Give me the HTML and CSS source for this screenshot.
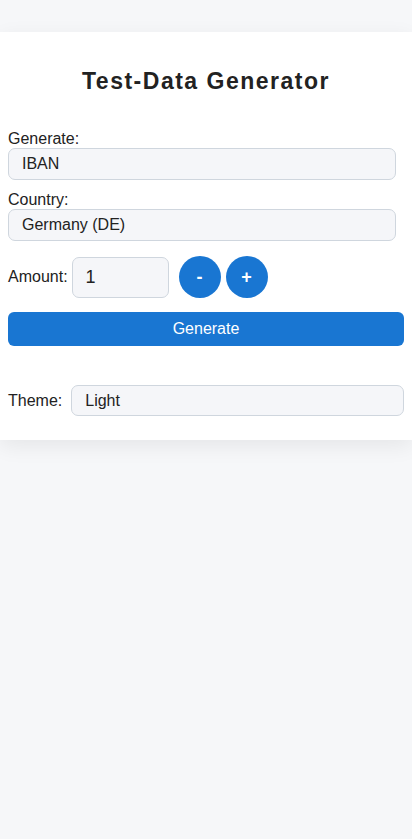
FILE: index.html
```html
<!DOCTYPE html>
<html lang="en">
<head>
<meta charset="utf-8">
<meta name="viewport" content="width=device-width, initial-scale=1">
<title>Test-Data Generator</title>
<link rel="stylesheet" href="styles.css">
</head>
<body>
<main class="card">
  <h1 class="title">Test-Data Generator</h1>
  <div class="field">
    <label class="label" for="type">Generate:</label>
    <div class="select" id="type">IBAN</div>
  </div>
  <div class="field">
    <label class="label" for="country">Country:</label>
    <div class="select" id="country">Germany (DE)</div>
  </div>
  <div class="amount-row">
    <label class="label-inline" for="amount">Amount:</label>
    <div class="amount-input" id="amount">1</div>
    <div class="steppers">
      <button class="circle-btn">-</button>
      <button class="circle-btn">+</button>
    </div>
  </div>
  <button class="generate-btn">Generate</button>
  <div class="theme-row">
    <label class="label-inline" for="theme">Theme:</label>
    <div class="select theme-select" id="theme">Light</div>
  </div>
</main>
</body>
</html>
```
FILE: styles.css
```css
* { box-sizing: border-box; }
html, body { margin: 0; padding: 0; }
body {
  background: #f6f7f9;
  font-family: "Liberation Sans", Arial, sans-serif;
  color: #222;
  padding-top: 32px;
  min-height: 839px;
}
.card {
  background: #ffffff;
  padding: 36px 8px 24px;
  box-shadow: 0 6px 20px rgba(0, 0, 0, 0.07);
}
.title {
  margin: 0 0 36px;
  text-align: center;
  font-size: 23px;
  line-height: 26px;
  font-weight: 700;
  letter-spacing: 1.5px;
  color: #222;
}
.field { margin-bottom: 11px; }
.label {
  display: block;
  font-size: 16px;
  line-height: 18px;
}
.select {
  width: 388px;
  height: 32px;
  border: 1px solid #cfd6de;
  border-radius: 7px;
  background: #f5f6f9;
  padding: 0 13px;
  font-size: 16px;
  line-height: 30px;
  color: #222;
}
.amount-row {
  display: flex;
  align-items: center;
  margin-top: 15px;
}
.label-inline {
  font-size: 16px;
  line-height: 18px;
}
.amount-input {
  margin-left: 4px;
  width: 97px;
  height: 41px;
  border: 1px solid #cfd6de;
  border-radius: 7px;
  background: #f5f6f9;
  padding: 0 13px;
  font-size: 18px;
  line-height: 39px;
}
.steppers {
  display: flex;
  gap: 5px;
  margin-left: 10px;
}
.circle-btn {
  width: 42px;
  height: 42px;
  border-radius: 50%;
  border: none;
  background: #1976d2;
  color: #fff;
  font-family: "Liberation Sans", Arial, sans-serif;
  font-size: 18px;
  font-weight: 700;
  padding: 0;
}
.generate-btn {
  display: block;
  width: 100%;
  height: 34px;
  margin-top: 14px;
  border: none;
  border-radius: 6px;
  background: #1976d2;
  color: #fff;
  font-family: "Liberation Sans", Arial, sans-serif;
  font-size: 16px;
  padding: 0;
}
.theme-row {
  display: flex;
  align-items: center;
  margin-top: 39px;
}
.theme-select {
  flex: 1;
  width: auto;
  margin-left: 9px;
  height: 31px;
  line-height: 29px;
}
```
